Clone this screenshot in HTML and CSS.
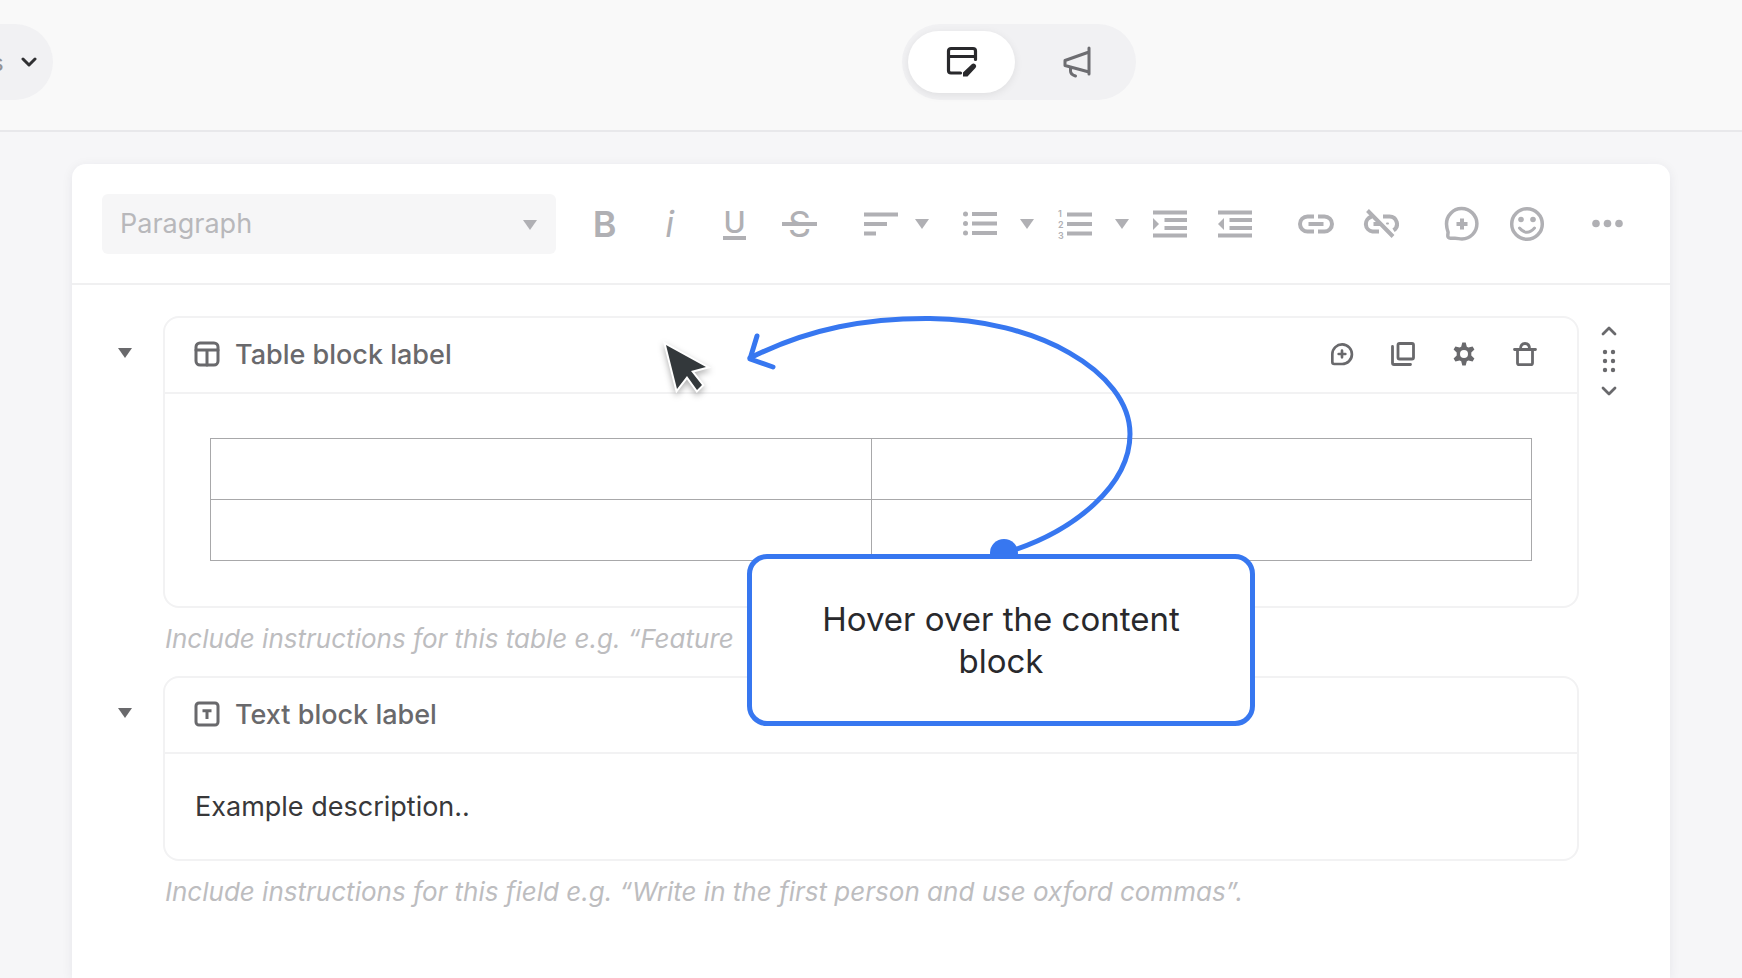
FILE: index.html
```html
<!DOCTYPE html>
<html lang="en">
<head>
    <meta charset="UTF-8">
    <meta name="viewport" content="width=device-width, initial-scale=1.0">
    <title>Content editor</title>
    <link rel="stylesheet" href="styles.css">
</head>
<body>
    <header class="topbar">
        <button class="status-pill" type="button">
            <span class="status-text">s</span>
            <svg width="16" height="12" viewBox="0 0 16 12"><path d="M2 3l6 6 6-6" stroke-width="3"/></svg>
        </button>
        <nav class="mode-switch">
            <button class="mode active" type="button" aria-label="Edit">
                <svg width="32" height="32" viewBox="0 0 32 32"><path d="M14.500 27H5a2.500 2.500 0 0 1-2.500-2.500V5A2.500 2.500 0 0 1 5 2.500h22A2.500 2.500 0 0 1 29.500 5v8.500M2.500 10.500h27" stroke-width="3.200"/><path d="M17 30.500v-4l9-8.500q1.500-1.200 3.300.3t.3 3.500L21.500 30.500z" class="solid"/></svg>
            </button>
            <button class="mode" type="button" aria-label="Announce">
                <svg width="32" height="32" viewBox="0 0 32 32"><path d="M28 2v26M28 6L4 14.500v5L28 26M9.500 21.500v3.500q0 3.500 5 5" stroke-width="3"/></svg>
            </button>
        </nav>
    </header>

    <main class="editor">
        <div class="toolbar">
            <div class="format">
                <select aria-label="Text format">
                    <option>Paragraph</option>
                </select>
                <svg class="caret" width="14" height="10" viewBox="0 0 14 10"><path d="M0 0h14L7 10z"/></svg>
            </div>
            <div class="group">
                <button class="tool bold" type="button">B</button>
                <button class="tool italic" type="button">i</button>
                <button class="tool underline" type="button"><span>U</span></button>
                <button class="tool strike" type="button"><span>S</span></button>
            </div>
            <div class="group">
                <button class="tool" type="button" aria-label="Align">
                    <svg width="36" height="36" viewBox="0 0 36 36"><path d="M1 8.500h34M1 18h23M1 27.500h12" class="bars"/></svg>
                </button>
                <button class="drop narrow" type="button" aria-label="Align options">
                    <svg class="caret" width="14" height="10" viewBox="0 0 14 10"><path d="M0 0h14L7 10z"/></svg>
                </button>
            </div>
            <div class="group">
                <button class="tool" type="button" aria-label="Bulleted list">
                    <svg width="36" height="36" viewBox="0 0 36 36"><path d="M10 8h25M10 17.500h25M10 27h25" class="bars"/><g class="solid"><circle cx="3.500" cy="8" r="2.500"/><circle cx="3.500" cy="17.500" r="2.500"/><circle cx="3.500" cy="27" r="2.500"/></g></svg>
                </button>
                <button class="drop" type="button" aria-label="Bulleted list options">
                    <svg class="caret" width="14" height="10" viewBox="0 0 14 10"><path d="M0 0h14L7 10z"/></svg>
                </button>
                <button class="tool" type="button" aria-label="Numbered list">
                    <svg width="36" height="36" viewBox="0 0 36 36"><path d="M10 8.500h25M10 18h25M10 27.500h25" class="bars"/><g class="digits"><text x="1" y="11">1</text><text x="1" y="22">2</text><text x="1" y="33">3</text></g></svg>
                </button>
                <button class="drop" type="button" aria-label="Numbered list options">
                    <svg class="caret" width="14" height="10" viewBox="0 0 14 10"><path d="M0 0h14L7 10z"/></svg>
                </button>
                <button class="tool" type="button" aria-label="Indent">
                    <svg width="36" height="36" viewBox="0 0 36 36"><path d="M1 6.500h34M12.500 14h22.500M12.500 22h22.500M1 29.500h34" class="bars"/><path d="M1 12l6 6-6 6z" class="solid"/></svg>
                </button>
                <button class="tool" type="button" aria-label="Outdent">
                    <svg width="36" height="36" viewBox="0 0 36 36"><path d="M1 6.500h34M12.500 14h22.500M12.500 22h22.500M1 29.500h34" class="bars"/><path d="M7 12l-6 6 6 6z" class="solid"/></svg>
                </button>
            </div>
            <div class="group">
                <button class="tool" type="button" aria-label="Link">
                    <svg width="36" height="36" viewBox="0 0 36 36"><path d="M16 10.500H9.500a7.500 7.500 0 0 0 0 15H16M20 10.500h6.500a7.500 7.500 0 0 1 0 15H20M10.500 18h15" class="bars"/></svg>
                </button>
                <button class="tool" type="button" aria-label="Remove link">
                    <svg width="36" height="36" viewBox="0 0 36 36"><path d="M8.500 10.800a7.500 7.500 0 0 0 1 14.700H16M20 10.500h6.500a7.500 7.500 0 0 1 4 13.800M10.500 18h8M4.500 4.500L30 30.500" class="bars"/><path d="M24 17.500h1" stroke-width="2"/></svg>
                </button>
            </div>
            <div class="group">
                <button class="tool" type="button" aria-label="Comment">
                    <svg width="36" height="36" viewBox="0 0 36 36"><path d="M18 33c-3 0-4-.8-7-.8H6.500q-3 0-2.700-3l.3-3C3 23 2.500 21 2.500 18A15.200 15.200 0 1 1 18 33z" stroke-width="3.500"/><path d="M18 12.500v11M12.500 18h11" class="bars"/></svg>
                </button>
                <button class="tool" type="button" aria-label="Emoji">
                    <svg width="36" height="36" viewBox="0 0 36 36"><circle cx="18" cy="18" r="15.300" stroke-width="3.500"/><path d="M10.500 22q7.500 8.500 15 0" stroke-width="3"/><g class="solid"><circle cx="12" cy="13.500" r="2.800"/><circle cx="24" cy="13.500" r="2.800"/></g></svg>
                </button>
            </div>
            <div class="group">
                <button class="tool" type="button" aria-label="More">
                    <svg width="36" height="36" viewBox="0 0 36 36"><g class="solid"><circle cx="6" cy="17.500" r="3.800"/><circle cx="17.500" cy="17.500" r="3.800"/><circle cx="29" cy="17.500" r="3.800"/></g></svg>
                </button>
            </div>
        </div>

        <div class="row">
            <button class="toggle" type="button" aria-label="Collapse table block">
                <svg class="caret" width="14" height="10" viewBox="0 0 14 10"><path d="M0 0h14L7 10z"/></svg>
            </button>
            <section class="block">
                <div class="block-head">
                    <svg width="26" height="26" viewBox="0 0 26 26"><rect x="2" y="2" width="22" height="22" rx="4" stroke-width="3"/><path d="M2 9h22M13 9v15" stroke-width="3"/></svg>
                    <h2>Table block label</h2>
                    <div class="actions">
                        <button type="button" aria-label="Comment">
                            <svg width="24" height="24" viewBox="0 0 36 36"><path d="M18 33H6.500q-3 0-3-3V18A14.700 14.700 0 1 1 18 33z" stroke-width="4"/><path d="M18 13v10M13 18h10" stroke-width="4"/></svg>
                        </button>
                        <button type="button" aria-label="Duplicate">
                            <svg width="26" height="26" viewBox="0 0 26 26"><rect x="8" y="2.500" width="15.500" height="15.500" rx="1.500" stroke-width="2.800"/><path d="M2.500 5.500V22q0 1.500 1.500 1.500h16.500" stroke-width="2.800"/></svg>
                        </button>
                        <button type="button" aria-label="Settings">
                            <svg width="26" height="26" viewBox="0 0 26 26"><path d="M11.300 1.500h3.400l1.100 4.200 1.600.9 4.200-1.100 1.800 2.900-3.100 3.100v3l3.100 3.100-1.800 2.900-4.200-1.100-1.600.9-1.100 4.200h-3.400l-1.100-4.200-1.600-.9-4.200 1.100-1.800-2.900 3.100-3.100v-3L2.600 8.400l1.800-2.900 4.200 1.100 1.600-.9z" class="solid"/><circle cx="13" cy="13" r="4" class="hole"/></svg>
                        </button>
                        <button type="button" aria-label="Delete">
                            <svg width="26" height="26" viewBox="0 0 26 26"><path d="M2.500 8.500h21M5.500 8.500V22q0 1.700 1.700 1.700h11.600q1.700 0 1.700-1.700V8.500M8.500 8q0-5.500 4.500-5.500T17.500 8" stroke-width="2.800"/></svg>
                        </button>
                    </div>
                </div>
                <div class="table-body">
                    <table>
                        <tr><td></td><td></td></tr>
                        <tr><td></td><td></td></tr>
                    </table>
                </div>
            </section>
            <div class="mover">
                <button type="button" aria-label="Move up">
                    <svg width="16" height="12" viewBox="0 0 16 12"><path d="M2 9l6-6 6 6" stroke-width="2.800"/></svg>
                </button>
                <svg width="16" height="26" viewBox="0 0 16 26"><g class="solid"><circle cx="4" cy="4" r="2.200"/><circle cx="12" cy="4" r="2.200"/><circle cx="4" cy="13" r="2.200"/><circle cx="12" cy="13" r="2.200"/><circle cx="4" cy="22" r="2.200"/><circle cx="12" cy="22" r="2.200"/></g></svg>
                <button type="button" aria-label="Move down">
                    <svg width="16" height="12" viewBox="0 0 16 12"><path d="M2 3l6 6 6-6" stroke-width="2.800"/></svg>
                </button>
            </div>
            <p class="hint">Include instructions for this table e.g. “Feature</p>
        </div>

        <div class="row">
            <button class="toggle" type="button" aria-label="Collapse text block">
                <svg class="caret" width="14" height="10" viewBox="0 0 14 10"><path d="M0 0h14L7 10z"/></svg>
            </button>
            <section class="block">
                <div class="block-head">
                    <svg width="26" height="26" viewBox="0 0 26 26"><rect x="2" y="2" width="22" height="22" rx="3" stroke-width="3"/><path d="M8.500 9.700h9M13 9v9" class="flat" stroke-width="3"/></svg>
                    <h2>Text block label</h2>
                </div>
                <p class="text-body">Example description..</p>
            </section>
            <p class="hint">Include instructions for this field e.g. “Write in the first person and use oxford commas”.</p>
        </div>

        <!-- walkthrough layer -->
        <svg class="pointer" width="60" height="60" viewBox="0 0 60 60"><path d="M8 7L48 29 33 33 44 47 39 52 29 38 19 51z"/></svg>
        <svg class="arrow" width="400" height="260" viewBox="740 308 400 260"><path d="M750 358C810 328 868 318 930 318.500C1035 319 1130 371 1130 434C1130 485 1075 531 1008 552"/><path d="M757 336l-7 23 23 8"/><circle cx="1004" cy="553" r="14"/></svg>
        <div class="callout">Hover over the content block</div>
    </main>
</body>
</html>
```

FILE: styles.css
```css
* {
    box-sizing: border-box;
}

body {
    margin: 0;
    min-height: 100vh;
    display: flex;
    flex-direction: column;
    background-color: #f6f6f8;
    color: #303032;
    font-family: Inter, 'Liberation Sans', sans-serif;
    font-size: 27px;
}

button {
    display: flex;
    align-items: center;
    justify-content: center;
    padding: 0;
    border: none;
    background: none;
    color: inherit;
    font: inherit;
    cursor: pointer;
}

svg {
    display: block;
    flex: none;
    fill: none;
    stroke: currentColor;
    stroke-linecap: round;
    stroke-linejoin: round;
}

svg .solid,
.caret {
    fill: currentColor;
    stroke: none;
}

svg .bars {
    stroke-width: 4;
    stroke-linecap: butt;
}

svg .flat {
    stroke-linecap: butt;
}

svg .hole {
    fill: #fff;
    stroke: none;
}

.topbar {
    display: flex;
    align-items: center;
    justify-content: space-between;
    height: 132px;
    padding: 0 606px 6px 0;
    background-color: #f9f9f9;
    border-bottom: 2px solid #e8e8eb;
}

.status-pill {
    height: 76px;
    padding-right: 16px;
    gap: 17px;
    background-color: #f1f1f3;
    border-radius: 0 38px 38px 0;
}

.status-text {
    margin-left: -9px;
    color: #929296;
    font-size: 24px;
}

.mode-switch {
    display: flex;
    gap: 8px;
    padding: 7px 6px;
    background-color: #f1f1f3;
    border-radius: 38px;
}

.mode {
    width: 107px;
    height: 62px;
    border-radius: 31px;
    color: #6d6d71;
}

.mode.active {
    background-color: #fff;
    color: #29292c;
    box-shadow: 0 2px 8px rgba(0, 0, 0, 0.08);
}

.editor {
    position: relative;
    flex: 1;
    margin: 32px 72px 0;
    background-color: #fff;
    border-radius: 14px 14px 0 0;
    box-shadow: 0 2px 12px rgba(30, 30, 60, 0.07);
}

.toolbar {
    display: flex;
    align-items: center;
    gap: 16px;
    height: 121px;
    padding: 0 30px;
    border-bottom: 2px solid #f0f0f1;
    color: #b0b0b4;
}

.format {
    position: relative;
    flex: 1;
}

.format select {
    appearance: none;
    display: block;
    width: 100%;
    height: 60px;
    padding: 0 18px;
    border: none;
    border-radius: 6px;
    background-color: #f6f6f7;
    color: #b8b8bb;
    font: inherit;
}

.format .caret {
    position: absolute;
    right: 19px;
    top: 26px;
    pointer-events: none;
}

.group {
    display: flex;
}

.tool {
    width: 65px;
    height: 60px;
}

.drop {
    width: 30px;
}

.drop.narrow {
    width: 18px;
}

.bold {
    font-size: 36px;
    font-weight: 600;
}

.italic {
    font-size: 36px;
    font-style: italic;
}

.underline span {
    border-bottom: 4px solid;
    font-size: 30px;
    font-weight: 500;
    line-height: 28px;
}

.strike {
    position: relative;
    font-size: 36px;
}

.strike::after {
    content: '';
    position: absolute;
    left: 15px;
    right: 15px;
    top: 28px;
    height: 4px;
    background-color: currentColor;
    box-shadow: 0 3px #fff;
}

.digits {
    fill: currentColor;
    stroke: none;
    font-size: 9px;
    font-weight: 600;
}

.row {
    display: grid;
    grid-template-columns: 91px 1fr 91px;
    padding-top: 31px;
    color: #69696c;
}

.row + .row {
    padding-top: 6px;
}

.toggle {
    align-self: start;
    width: 44px;
    height: 74px;
    margin-left: 31px;
}

.block {
    border: 2px solid #f2f2f3;
    border-radius: 16px;
}

.block-head {
    display: flex;
    align-items: center;
    gap: 15px;
    height: 76px;
    padding: 0 22px 2px 29px;
    border-bottom: 2px solid #f2f2f3;
}

.block-head h2 {
    margin: 0;
    font-size: 27px;
    font-weight: 500;
}

.actions {
    display: flex;
    margin-left: auto;
}

.actions button {
    width: 61px;
    height: 60px;
}

.table-body {
    padding: 44px 45px 45px;
}

table {
    width: 100%;
    border-collapse: collapse;
    table-layout: fixed;
}

td {
    height: 61px;
    border: 1px solid #a8a8aa;
}

.mover {
    display: flex;
    flex-direction: column;
    align-items: flex-start;
    gap: 11px;
    padding: 9px 22px;
}

.hint {
    grid-column: 2;
    margin: 0;
    padding-left: 2px;
    color: #bdbdbf;
    font-size: 26px;
    font-style: italic;
    line-height: 62px;
}

.text-body {
    margin: 0;
    padding: 0 30px;
    color: #38383a;
    line-height: 105px;
}

.pointer {
    position: absolute;
    left: 586px;
    top: 174px;
    fill: #33383b;
    stroke: #fff;
    stroke-width: 4;
    paint-order: stroke;
    stroke-linejoin: miter;
    filter: drop-shadow(0 3px 3px rgba(0, 0, 0, 0.3));
}

.arrow {
    position: absolute;
    left: calc(50% - 131px);
    top: 144px;
    stroke: #3777f0;
    stroke-width: 5;
    pointer-events: none;
}

.arrow circle {
    fill: #3777f0;
    stroke: none;
}

.callout {
    position: absolute;
    left: calc(50% - 124px);
    top: 390px;
    width: 508px;
    padding: 39px 60px;
    background-color: #fff;
    border: 5px solid #3777f0;
    border-radius: 20px;
    color: #29292c;
    font-size: 33px;
    line-height: 42px;
    text-align: center;
}
```
